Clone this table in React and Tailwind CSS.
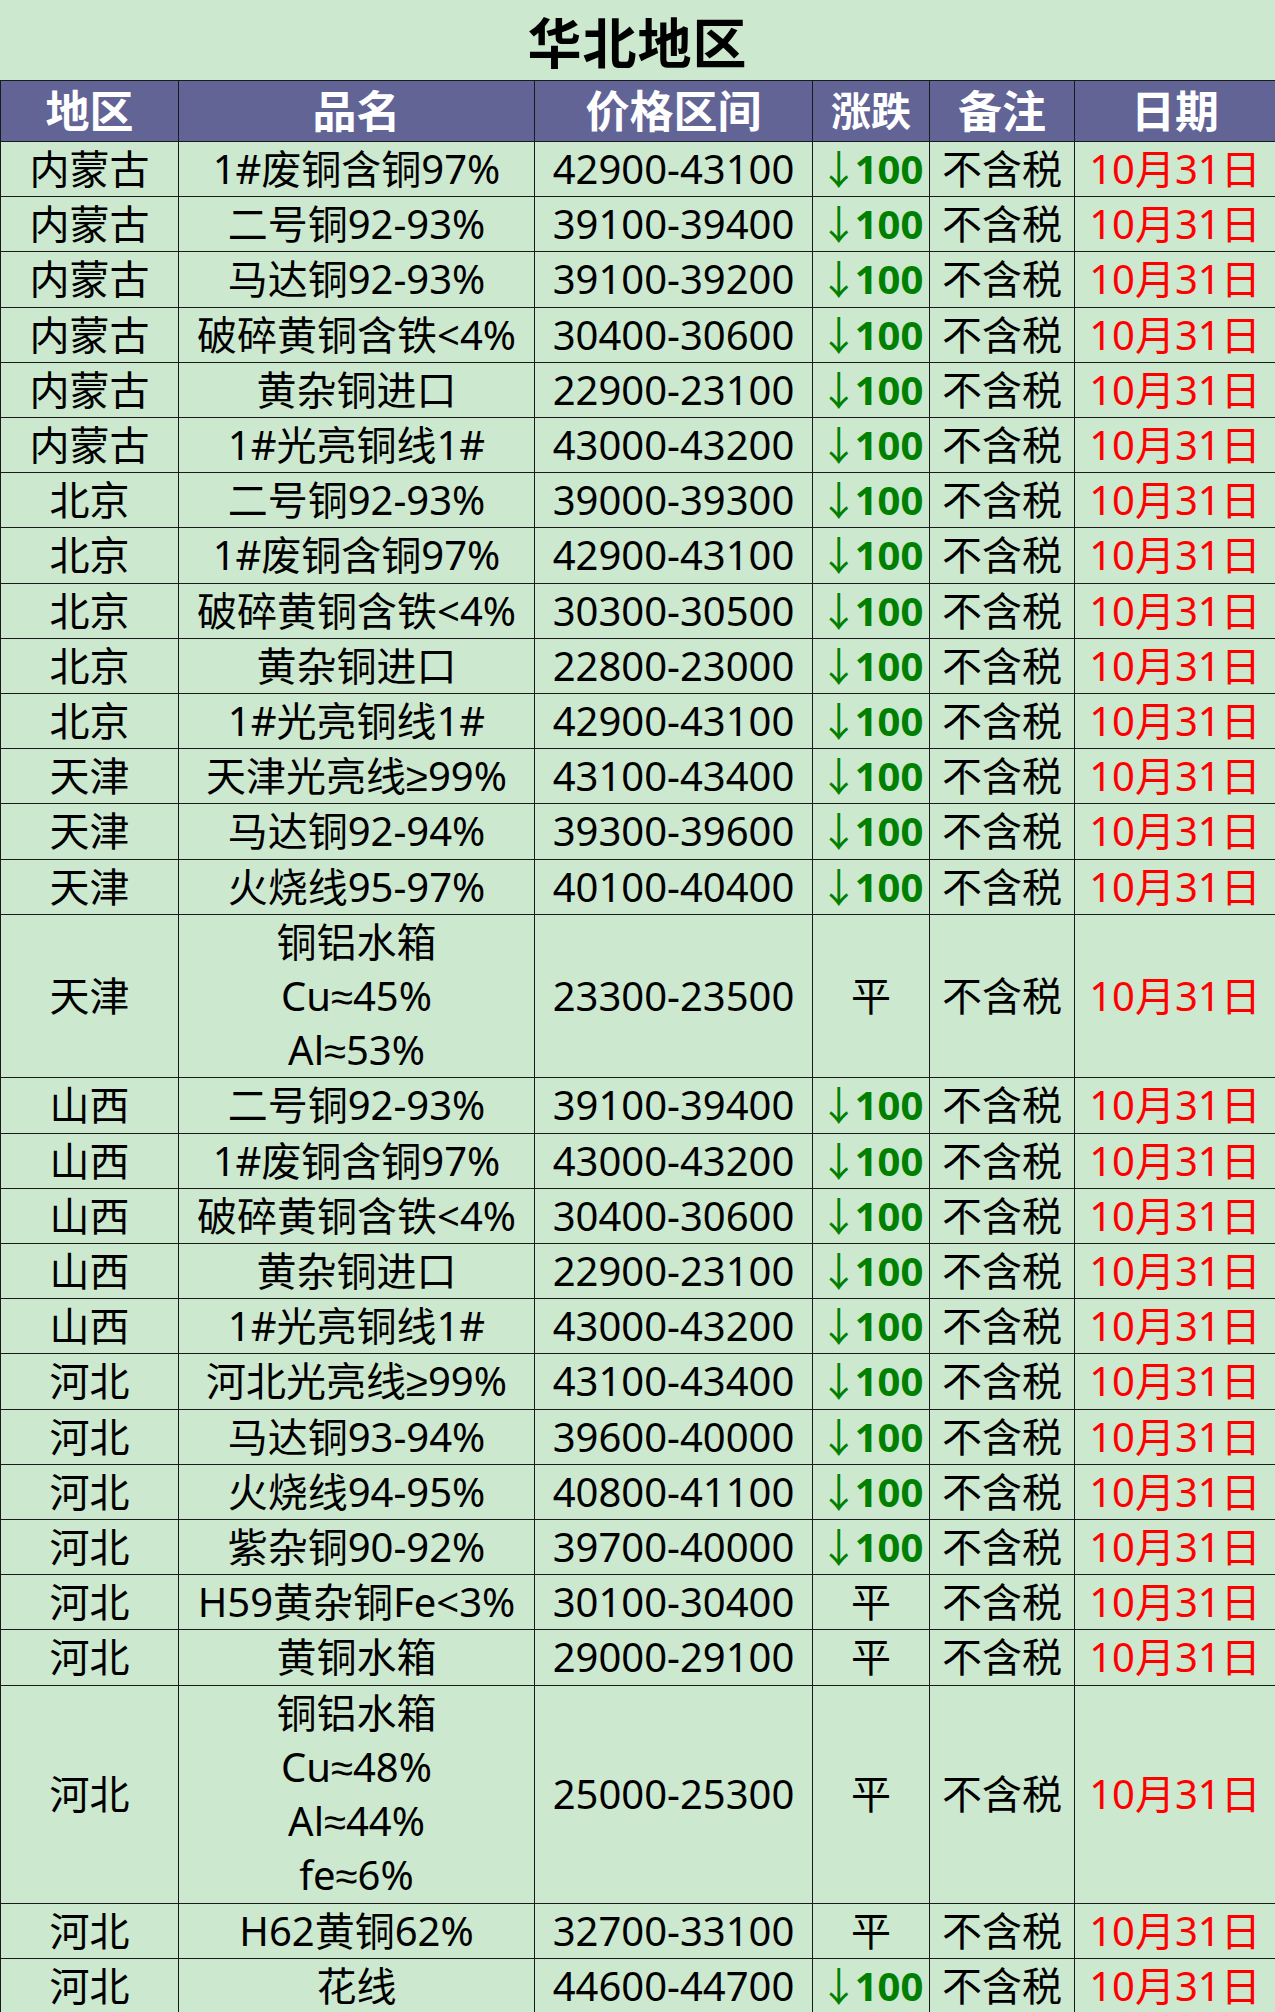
const rows = [
  ['内蒙古', ['1#废铜含铜97%'], '42900-43100', 'd'],
  ['内蒙古', ['二号铜92-93%'], '39100-39400', 'd'],
  ['内蒙古', ['马达铜92-93%'], '39100-39200', 'd'],
  ['内蒙古', ['破碎黄铜含铁<4%'], '30400-30600', 'd'],
  ['内蒙古', ['黄杂铜进口'], '22900-23100', 'd'],
  ['内蒙古', ['1#光亮铜线1#'], '43000-43200', 'd'],
  ['北京', ['二号铜92-93%'], '39000-39300', 'd'],
  ['北京', ['1#废铜含铜97%'], '42900-43100', 'd'],
  ['北京', ['破碎黄铜含铁<4%'], '30300-30500', 'd'],
  ['北京', ['黄杂铜进口'], '22800-23000', 'd'],
  ['北京', ['1#光亮铜线1#'], '42900-43100', 'd'],
  ['天津', ['天津光亮线≥99%'], '43100-43400', 'd'],
  ['天津', ['马达铜92-94%'], '39300-39600', 'd'],
  ['天津', ['火烧线95-97%'], '40100-40400', 'd'],
  ['天津', ['铜铝水箱', 'Cu≈45%', 'Al≈53%'], '23300-23500', 'p'],
  ['山西', ['二号铜92-93%'], '39100-39400', 'd'],
  ['山西', ['1#废铜含铜97%'], '43000-43200', 'd'],
  ['山西', ['破碎黄铜含铁<4%'], '30400-30600', 'd'],
  ['山西', ['黄杂铜进口'], '22900-23100', 'd'],
  ['山西', ['1#光亮铜线1#'], '43000-43200', 'd'],
  ['河北', ['河北光亮线≥99%'], '43100-43400', 'd'],
  ['河北', ['马达铜93-94%'], '39600-40000', 'd'],
  ['河北', ['火烧线94-95%'], '40800-41100', 'd'],
  ['河北', ['紫杂铜90-92%'], '39700-40000', 'd'],
  ['河北', ['H59黄杂铜Fe<3%'], '30100-30400', 'p'],
  ['河北', ['黄铜水箱'], '29000-29100', 'p'],
  ['河北', ['铜铝水箱', 'Cu≈48%', 'Al≈44%', 'fe≈6%'], '25000-25300', 'p'],
  ['河北', ['H62黄铜62%'], '32700-33100', 'p'],
  ['河北', ['花线'], '44600-44700', 'd'],
]

const cell = 'border border-[#1a1a1a] p-0 text-center align-middle whitespace-nowrap'
const head = cell + ' leading-[60px]'
const body = cell + ' leading-[54.2px]'

export default function App() {
  return (
    <div
      className="w-[1275px] bg-[#cce8cf] text-black"
      style={{ fontFamily: '"Noto Sans", "Liberation Sans", "Noto Sans CJK SC", sans-serif' }}
    >
      <div
        className="flex h-[80px] items-center justify-center text-[54px] font-bold tracking-[1px]"
        style={{ fontFamily: '"Noto Sans CJK SC", sans-serif' }}
      >
        华北地区
      </div>
      <table className="w-[1275px] table-fixed border-collapse">
        <colgroup>
          <col className="w-[178px]" />
          <col className="w-[356px]" />
          <col className="w-[278px]" />
          <col className="w-[117px]" />
          <col className="w-[145px]" />
          <col className="w-[201px]" />
        </colgroup>
        <thead>
          <tr className="bg-[#626496] text-white font-bold text-[44px]">
            <th className={head}>地区</th>
            <th className={head}>品名</th>
            <th className={head}>价格区间</th>
            <th className={head + ' text-[40px]'}>涨跌</th>
            <th className={head}>备注</th>
            <th className={head}>日期</th>
          </tr>
        </thead>
        <tbody className="text-[40px]">
          {rows.map(([area, name, price, chg], i) => (
            <tr key={i}>
              <td className={body}>{area}</td>
              <td className={body}>
                {name.map((line, j) => (
                  <div key={j}>{line}</div>
                ))}
              </td>
              <td className={body}>{price}</td>
              <td className={body}>
                {chg === 'd' ? (
                  <span className="text-[#008000]">
                    <span
                      className="leading-[0px] tracking-[-4px]"
                      style={{ fontFamily: '"Noto Sans CJK SC", sans-serif' }}
                    >
                      ↓
                    </span>
                    <span className="font-bold">100</span>
                  </span>
                ) : (
                  <span>平</span>
                )}
              </td>
              <td className={body}>不含税</td>
              <td className={body + ' text-[#ff0000]'}>10月31日</td>
            </tr>
          ))}
        </tbody>
      </table>
    </div>
  )
}
